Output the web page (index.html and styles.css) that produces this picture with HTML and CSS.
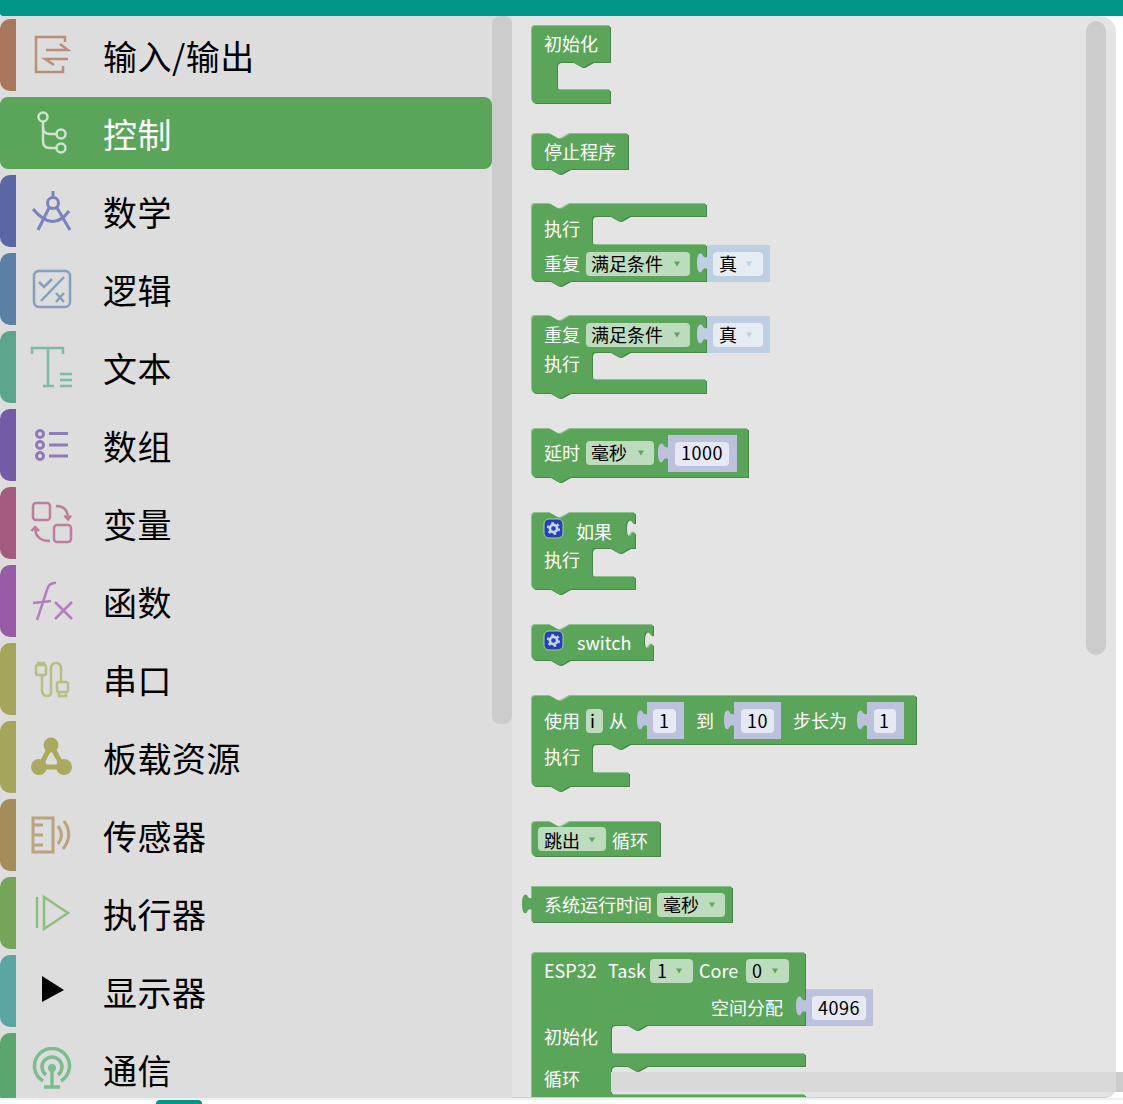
FILE: index.html
```html
<!DOCTYPE html>
<html lang="zh-CN">
<head>
<meta charset="utf-8">
<title>Blocks</title>
<link rel="stylesheet" href="styles.css">
</head>
<body>
<div class="topbar"></div>
<div class="main">
  <aside class="sidebar">
    <div class="thumb-side"></div>
    <div class="row"><span class="stripe c-io"></span><span class="icon-box"><svg class="ico s-io" viewBox="0 0 44 44"><path d="M35 9V4H6V39H33V33"/><path d="M16 17H38L30 11"/><path d="M38 26H15L24 32"/></svg></span><span class="label">输入/输出</span></div>
    <div class="row active"><span class="stripe c-ctl"></span><span class="icon-box"><svg class="ico s-ctl" viewBox="0 0 44 44"><circle cx="13" cy="6" r="4.5"/><circle cx="31" cy="23" r="4.5"/><circle cx="31" cy="37" r="4.5"/><path d="M13 10.5V30Q13 37 20 37H26.5"/><path d="M13 16Q13 23 20 23H26.5"/></svg></span><span class="label">控制</span></div>
    <div class="row"><span class="stripe c-math"></span><span class="icon-box"><svg class="ico s-math" viewBox="0 0 44 44"><path d="M23 2V8"/><circle cx="23" cy="14" r="5.500"/><path d="M19.500 18L8 41M26.500 18L40 41"/><path d="M3 20Q23 44 39 22"/></svg></span><span class="label">数学</span></div>
    <div class="row"><span class="stripe c-logic"></span><span class="icon-box"><svg class="ico s-logic" viewBox="0 0 44 44"><rect x="4" y="4" width="36" height="36" rx="5"/><path d="M11 34L34 10"/><path d="M9 15L14 20L22 12"/><path d="M26 26L34 35M34 26L26 35"/></svg></span><span class="label">逻辑</span></div>
    <div class="row"><span class="stripe c-text"></span><span class="icon-box"><svg class="ico s-text" viewBox="0 0 44 44"><path d="M2 9V3H33V9M18 3V41M13 41H24"/><path d="M30 29H42M30 35H42M30 41H42"/></svg></span><span class="label">文本</span></div>
    <div class="row"><span class="stripe c-list"></span><span class="icon-box"><svg class="ico s-list" viewBox="0 0 44 44"><circle cx="10" cy="11" r="3.500"/><circle cx="10" cy="22" r="3.500"/><circle cx="10" cy="33" r="3.500"/><path d="M19 10.500H38M19 22H38M19 33H38"/></svg></span><span class="label">数组</span></div>
    <div class="row"><span class="stripe c-var"></span><span class="icon-box"><svg class="ico s-var" viewBox="0 0 44 44"><rect x="3" y="2" width="17" height="17" rx="3"/><rect x="24" y="24" width="17" height="17" rx="3"/><path d="M26 5Q38 5 38 18M34.500 14.500L38 18.500L41 14.500"/><path d="M20 40Q5 40 5 26M1.500 30L5 26L9 30"/></svg></span><span class="label">变量</span></div>
    <div class="row"><span class="stripe c-fn"></span><span class="icon-box"><svg class="ico s-fn" viewBox="0 0 44 44"><path d="M26 4Q19 3 17 11L7 41"/><path d="M3 24L21 22"/><path d="M25 23L42 40M42 23L25 40"/></svg></span><span class="label">函数</span></div>
    <div class="row"><span class="stripe c-ser"></span><span class="icon-box"><svg class="ico s-ser" viewBox="0 0 44 44"><rect x="6" y="8" width="10" height="10" rx="2"/><path d="M8 8V6H14V8"/><path d="M12 18V33Q12 39 17 39T21 33V12Q21 6 26 6T31 12V25"/><rect x="27" y="25" width="11" height="10" rx="2"/><path d="M29 35V39H36V35"/></svg></span><span class="label">串口</span></div>
    <div class="row"><span class="stripe c-ser"></span><span class="icon-box"><svg class="ico s-res" viewBox="0 0 44 44"><path d="M21 10L10 32H33Z"/><circle class="solid" cx="21" cy="10" r="7.500"/><circle class="solid" cx="9" cy="32" r="8"/><circle class="solid" cx="34" cy="32" r="8"/></svg></span><span class="label">板载资源</span></div>
    <div class="row"><span class="stripe c-sen"></span><span class="icon-box"><svg class="ico s-sen" viewBox="0 0 44 44"><path d="M3 5H23V39H3Z"/><path d="M3 12H13M3 22H13M3 32H13"/><path d="M28 13Q35 22 28 31"/><path d="M34 8Q44 22 33 36"/></svg></span><span class="label">传感器</span></div>
    <div class="row"><span class="stripe c-act"></span><span class="icon-box"><svg class="ico s-act" viewBox="0 0 44 44"><path d="M7 6V37"/><path d="M14 6L38 22L14 38Z"/></svg></span><span class="label">执行器</span></div>
    <div class="row"><span class="stripe c-dis"></span><span class="icon-box"><svg class="ico" viewBox="0 0 44 44"><path class="black" d="M12 7L34 21L12 33Z"/></svg></span><span class="label">显示器</span></div>
    <div class="row"><span class="stripe c-com"></span><span class="icon-box"><svg class="ico s-com" viewBox="0 0 44 44"><path d="M13 34A17.500 17.500 0 1 1 31 34"/><path d="M16 28A10 10 0 1 1 28 28"/><circle class="solid" cx="22" cy="21" r="4"/><path d="M22 21V39M14 40H30"/></svg></span><span class="label">通信</span></div>
  </aside>

  <section class="workspace">
    <svg class="canvas" viewBox="512 16 604 1082" width="604" height="1082">
      <defs>
        <path id="tab" d="M0 3C-3 4 -4 2 -5 0C-6 -1 -10 -2 -10 9C-10 20 -6 19 -5 17C-4 15 -3 13 0 15Z"/>
        <path id="arr" d="M-3 -2.500H3L0 2.500Z"/>
        <g id="gear">
          <rect class="gear-box" x="0" y="0" width="19" height="19" rx="5"/>
          <circle class="gear-ring" cx="9.500" cy="9.500" r="3.600"/>
          <circle class="gear-teeth" cx="9.500" cy="9.500" r="5.600"/>
        </g>
      </defs>

      <!-- block bodies -->
      <g class="blk">
        <path d="M532 30q0-4 4-4H610V62H593l-7 4q-3 2-6 0l-7-4H561q-4 0-4 4V86q0 4 4 4H610V103H536q-4 0-4-4Z"/>
        <path d="M532 138q0-4 4-4H550l7 4q3 2 6 0l7-4H628V169H570l-7 4q-3 2-6 0l-7-4H536q-4 0-4-4Z"/>
        <path d="M532 208q0-4 4-4H550l7 4q3 2 6 0l7-4H706V216H630l-7 4q-3 2-6 0l-7-4H596q-4 0-4 4V241q0 4 4 4H706V281H570l-7 4q-3 2-6 0l-7-4H536q-4 0-4-4Z"/>
        <path d="M532 320q0-4 4-4H550l7 4q3 2 6 0l7-4H706V352H630l-7 4q-3 2-6 0l-7-4H596q-4 0-4 4V376q0 4 4 4H706V393H570l-7 4q-3 2-6 0l-7-4H536q-4 0-4-4Z"/>
        <path d="M532 433q0-4 4-4H550l7 4q3 2 6 0l7-4H748V477H570l-7 4q-3 2-6 0l-7-4H536q-4 0-4-4Z"/>
        <path d="M532 517q0-4 4-4H550l7 4q3 2 6 0l7-4H635V523C633 524 632 522 631 520C630 519 626 518 626 528C626 538 630 537 631 535C632 533 633 532 635 533V548H630l-7 4q-3 2-6 0l-7-4H596q-4 0-4 4V573q0 4 4 4H635V589H570l-7 4q-3 2-6 0l-7-4H536q-4 0-4-4Z"/>
        <path d="M532 629q0-4 4-4H550l7 4q3 2 6 0l7-4H653V635C651 636 650 634 649 632C648 631 644 630 644 640C644 650 648 649 649 647C650 645 651 644 653 645V660H570l-7 4q-3 2-6 0l-7-4H536q-4 0-4-4Z"/>
        <path d="M532 700q0-4 4-4H550l7 4q3 2 6 0l7-4H916V744H630l-7 4q-3 2-6 0l-7-4H596q-4 0-4 4V769q0 4 4 4H629V786H570l-7 4q-3 2-6 0l-7-4H536q-4 0-4-4Z"/>
        <path d="M532 826q0-4 4-4H550l7 4q3 2 6 0l7-4H660V856H536q-4 0-4-4Z"/>
        <path d="M532 887H732V922H532Z"/>
        <path d="M532 957q0-4 4-4H805V1025H647l-7 4q-3 2-6 0l-7-4H615q-4 0-4 4V1050q0 4 4 4H805V1066H647l-7 4q-3 2-6 0l-7-4H615q-4 0-4 4V1091q0 4 4 4H805V1110H532Z"/>
      </g>

      <!-- boolean inputs -->
      <rect class="v-bool" x="707" y="245" width="63" height="37"/>
      <rect class="v-bool" x="707" y="316" width="63" height="37"/>
      <use class="t-bool" href="#tab" x="707" y="254"/>
      <use class="t-bool" href="#tab" x="707" y="325"/>
      <rect class="f-bool" x="713" y="252" width="50" height="24" rx="4"/>
      <rect class="f-bool" x="713" y="323" width="50" height="24" rx="4"/>

      <!-- number inputs -->
      <rect class="v-num" x="668" y="435" width="69" height="37"/>
      <rect class="v-num" x="647" y="702" width="37" height="37"/>
      <rect class="v-num" x="734" y="702" width="47" height="37"/>
      <rect class="v-num" x="867" y="702" width="37" height="37"/>
      <rect class="v-num" x="806" y="989" width="67" height="37"/>
      <use class="t-num" href="#tab" x="668" y="444"/>
      <use class="t-num" href="#tab" x="647" y="711"/>
      <use class="t-num" href="#tab" x="734" y="711"/>
      <use class="t-num" href="#tab" x="867" y="711"/>
      <use class="t-num" href="#tab" x="806" y="997"/>
      <use class="t-green" href="#tab" x="532" y="895"/>
      <rect class="f-num" x="675" y="442" width="54" height="24" rx="4"/>
      <rect class="f-num" x="653" y="709" width="23" height="24" rx="4"/>
      <rect class="f-num" x="741" y="709" width="33" height="24" rx="4"/>
      <rect class="f-num" x="874" y="709" width="22" height="24" rx="4"/>
      <rect class="f-num" x="812" y="996" width="54" height="24" rx="4"/>

      <!-- dropdowns -->
      <rect class="dd" x="586" y="252" width="104" height="24" rx="4"/>
      <rect class="dd" x="586" y="323" width="104" height="24" rx="4"/>
      <rect class="dd" x="586" y="441" width="68" height="24" rx="4"/>
      <rect class="dd" x="586" y="709" width="17" height="24" rx="4"/>
      <rect class="dd" x="538" y="827" width="68" height="24" rx="4"/>
      <rect class="dd" x="657" y="893" width="68" height="24" rx="4"/>
      <rect class="dd" x="650" y="959" width="43" height="24" rx="4"/>
      <rect class="dd" x="746" y="959" width="43" height="24" rx="4"/>
      <use class="a-g" href="#arr" x="677" y="264"/>
      <use class="a-g" href="#arr" x="677" y="335"/>
      <use class="a-g" href="#arr" x="641" y="453"/>
      <use class="a-g" href="#arr" x="592" y="840"/>
      <use class="a-g" href="#arr" x="712" y="905"/>
      <use class="a-g" href="#arr" x="679" y="971"/>
      <use class="a-g" href="#arr" x="775" y="971"/>
      <use class="a-b" href="#arr" x="749" y="264"/>
      <use class="a-b" href="#arr" x="749" y="335"/>

      <use href="#gear" x="544" y="519"/>
      <use href="#gear" x="544" y="631"/>

      <!-- labels -->
      <g class="w" transform="translate(0 1)">
        <text x="544" y="50">初始化</text>
        <text x="544" y="158">停止程序</text>
        <text x="544" y="235">执行</text>
        <text x="544" y="270">重复</text>
        <text x="544" y="341">重复</text>
        <text x="544" y="370">执行</text>
        <text x="544" y="459">延时</text>
        <text x="576" y="538">如果</text>
        <text x="544" y="566">执行</text>
        <text x="577" y="649">switch</text>
        <text x="544" y="727">使用</text>
        <text x="609" y="727">从</text>
        <text x="696" y="727">到</text>
        <text x="793" y="727">步长为</text>
        <text x="544" y="763">执行</text>
        <text x="612" y="847">循环</text>
        <text x="544" y="911">系统运行时间</text>
        <text x="544" y="977">ESP32</text>
        <text x="608" y="977">Task</text>
        <text x="699" y="977">Core</text>
        <text x="711" y="1014">空间分配</text>
        <text x="544" y="1043">初始化</text>
        <text x="544" y="1085">循环</text>
      </g>
      <g class="k" transform="translate(0 1)">
        <text x="591" y="270">满足条件</text>
        <text x="719" y="270">真</text>
        <text x="591" y="341">满足条件</text>
        <text x="719" y="341">真</text>
        <text x="591" y="459">毫秒</text>
        <text class="num" x="681" y="459">1000</text>
        <text x="590" y="727">i</text>
        <text class="num" x="659" y="727">1</text>
        <text class="num" x="747" y="727">10</text>
        <text class="num" x="879" y="727">1</text>
        <text x="544" y="847">跳出</text>
        <text x="663" y="911">毫秒</text>
        <text x="657" y="977">1</text>
        <text x="752" y="977">0</text>
        <text class="num" x="818" y="1014">4096</text>
      </g>
    </svg>
    <div class="thumb-work"></div>
  </section>
  <div class="hscroll"></div>
</div>
<footer class="bottom"><span class="tab-mark"></span></footer>
</body>
</html>
```
FILE: styles.css
```css
* { box-sizing: border-box; }
html, body { margin: 0; padding: 0; }
body {
  width: 1123px;
  height: 1104px;
  overflow: hidden;
  background: #fff;
  font-family: "Noto Sans CJK SC", "Noto Sans", sans-serif;
}
.topbar { height: 16px; background: #009688; border-bottom-left-radius: 3px; }
.main { position: relative; display: flex; height: 1082px; }

.sidebar {
  position: relative;
  width: 512px;
  flex: none;
  overflow: hidden;
  background: #ddd;
  padding-top: 3px;
  display: flex;
  flex-direction: column;
  gap: 6px;
}
.thumb-side {
  position: absolute;
  left: 492px;
  top: 0;
  width: 20px;
  height: 708px;
  border-radius: 8px;
  background: #ccc;
}
.row {
  display: flex;
  align-items: center;
  flex: none;
  width: 492px;
  height: 72px;
  border-radius: 8px;
  color: #000;
}
.row.active { background: #5ba55b; color: #fff; }
.stripe { flex: none; width: 16px; height: 72px; border-radius: 10px 0 0 10px; }
.icon-box { flex: none; width: 72px; display: flex; justify-content: center; }
.label { margin-left: 15px; font-size: 34px; line-height: 44px; letter-spacing: 0.5px; position: relative; top: 1px; }

.c-io { background: #a8775b; }
.c-ctl { background: #5ba55b; }
.c-math { background: #5b67a5; }
.c-logic { background: #5b80a5; }
.c-text { background: #5ba58c; }
.c-list { background: #745ba5; }
.c-var { background: #a55b80; }
.c-fn { background: #995ba5; }
.c-ser { background: #a5a55b; }
.c-sen { background: #a58c5b; }
.c-act { background: #74a55b; }
.c-dis { background: #5ba5a5; }
.c-com { background: #5ba56f; }

.ico { display: block; width: 44px; height: 44px; fill: none; stroke-width: 2.500; }
.s-io { stroke: #b98f7a; }
.s-ctl { stroke: #cfe4cf; }
.s-math { stroke: #7a84bb; stroke-width: 3; }
.s-logic { stroke: #85a0bd; }
.s-text { stroke: #7ebaa5; }
.s-list { stroke: #8f7aba; stroke-width: 3; }
.s-var { stroke: #bd7fa0; }
.s-fn { stroke: #b27fbc; }
.s-ser { stroke: #bcbc85; }
.s-res { stroke: #aaa960; stroke-width: 5; }
.s-res .solid { fill: #aaa960; stroke: none; }
.s-sen { stroke: #bca37f; stroke-width: 3; }
.s-act { stroke: #8fbd7f; }
.s-com { stroke: #7dbc8f; stroke-width: 3.500; }
.s-com .solid { fill: #7dbc8f; stroke: none; }
.black { fill: #000; stroke: none; }

.workspace {
  position: relative;
  width: 604px;
  flex: none;
  overflow: hidden;
  background: #e4e4e4;
  border-radius: 0 16px 12px 0;
  border-bottom: 1px solid #ccc;
}
.canvas { display: block; }
.thumb-work {
  position: absolute;
  left: 574px;
  top: 5px;
  width: 20px;
  height: 634px;
  border-radius: 10px;
  background: #ccc;
}
.hscroll {
  position: absolute;
  left: 611px;
  top: 1056px;
  width: 512px;
  height: 20px;
  background: linear-gradient(to right, #d9d9d9 505px, #ccc 505px);
}

.blk { filter: drop-shadow(1px 1px 0 #498449) drop-shadow(-1px -1px 0 #8cc08c); }
.blk path { fill: #5ba55b; }
.v-bool, .t-bool { fill: #bdcfe0; }
.f-bool { fill: #e6ecf4; }
.v-num, .t-num { fill: #bdc2dc; }
.f-num { fill: #e6e8f3; }
.t-green { fill: #5ba55b; }
.dd { fill: #bddbbd; }
.a-g { fill: #5ba55b; }
.a-b { fill: #bdcfe0; }
.gear-box { fill: #2541b2; stroke: #a9cfa9; stroke-width: 1; }
.gear-ring { fill: none; stroke: #c6d4e6; stroke-width: 2.600; }
.gear-teeth { fill: none; stroke: #c6d4e6; stroke-width: 2; stroke-dasharray: 2.600 3.260; }
.canvas text { font-family: "Noto Sans CJK SC", "Noto Sans", sans-serif; font-size: 18px; }
.canvas .num { letter-spacing: 0.5px; }
.w text { fill: #fff; }
.k text { fill: #000; }

.bottom {
  height: 6px;
  border-top: 2px solid #f0f0f0;
  background: #fff;
  padding-left: 156px;
}
.tab-mark {
  display: block;
  width: 46px;
  height: 4px;
  background: #009688;
  border-radius: 4px 4px 0 0;
}
```
